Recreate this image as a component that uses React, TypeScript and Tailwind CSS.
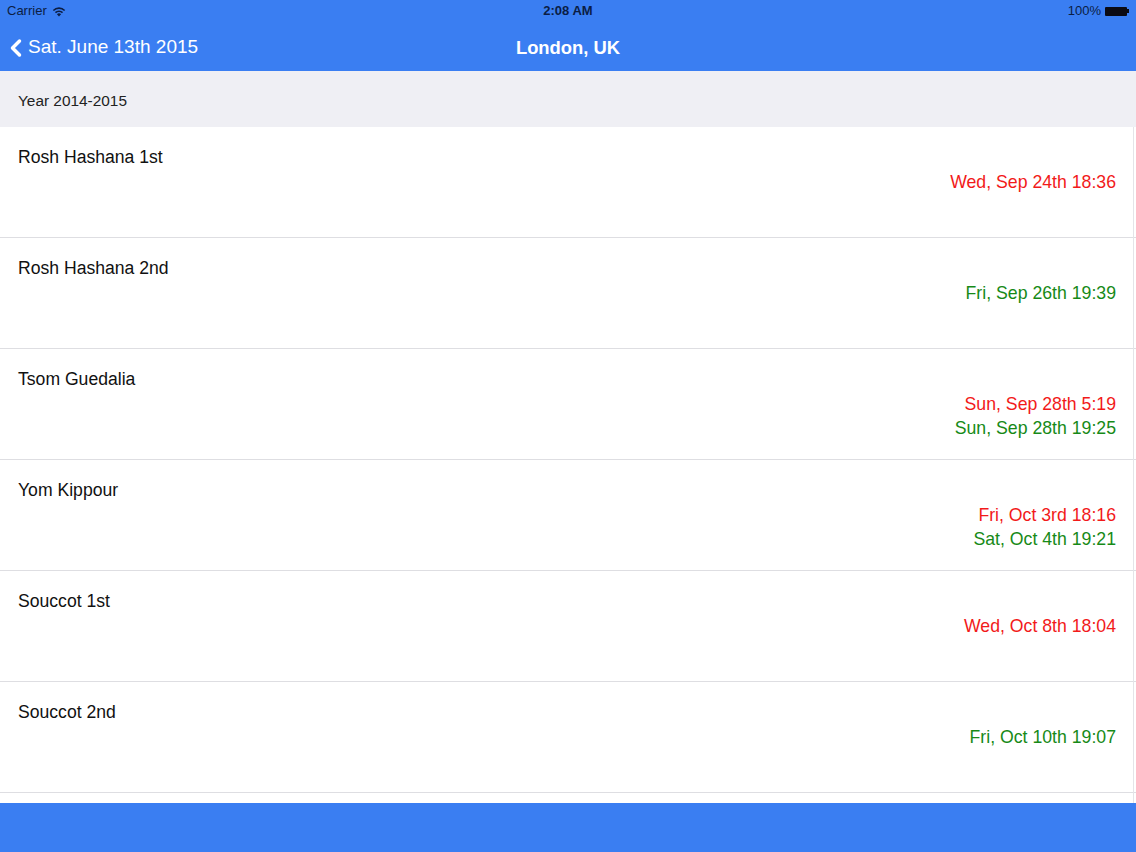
import { ChevronLeft } from "lucide-react";

type Holiday = {
  name: string;
  times: { text: string; color: "red" | "green" }[];
};

const holidays: Holiday[] = [
  { name: "Rosh Hashana 1st", times: [{ text: "Wed, Sep 24th 18:36", color: "red" }] },
  { name: "Rosh Hashana 2nd", times: [{ text: "Fri, Sep 26th 19:39", color: "green" }] },
  {
    name: "Tsom Guedalia",
    times: [
      { text: "Sun, Sep 28th 5:19", color: "red" },
      { text: "Sun, Sep 28th 19:25", color: "green" },
    ],
  },
  {
    name: "Yom Kippour",
    times: [
      { text: "Fri, Oct 3rd 18:16", color: "red" },
      { text: "Sat, Oct 4th 19:21", color: "green" },
    ],
  },
  { name: "Souccot 1st", times: [{ text: "Wed, Oct 8th 18:04", color: "red" }] },
  { name: "Souccot 2nd", times: [{ text: "Fri, Oct 10th 19:07", color: "green" }] },
];

function StatusBar() {
  return (
    <div className="relative flex h-[22px] items-center justify-between px-[7px] text-[13px] text-[#0b1d44]">
      <div className="flex items-center gap-[5px]">
        <span>Carrier</span>
        <svg width="14" height="11" viewBox="0 0 14 11" fill="#0b1d44">
          <path d="M7 10.5 L4.9 8.2 A3 3 0 0 1 9.1 8.2 Z" />
          <path d="M2.9 6.1 A5.8 5.8 0 0 1 11.1 6.1 L10 7.3 A4.2 4.2 0 0 0 4 7.3 Z" />
          <path d="M0.8 3.9 A8.8 8.8 0 0 1 13.2 3.9 L12.1 5.1 A7.2 7.2 0 0 0 1.9 5.1 Z" />
        </svg>
      </div>
      <span className="absolute left-1/2 -translate-x-1/2 font-bold">2:08 AM</span>
      <div className="flex items-center gap-[4px]">
        <span>100%</span>
        <div className="flex items-center">
          <div className="h-[9px] w-[22px] rounded-[1px] bg-[#0b0b14]" />
          <div className="h-[4px] w-[2px] bg-[#0b0b14]" />
        </div>
      </div>
    </div>
  );
}

export default function App() {
  return (
    <div
      className="flex h-[852px] w-[1136px] flex-col overflow-hidden bg-white"
      style={{ fontFamily: '"Liberation Sans", Arial, sans-serif' }}
    >
      <div className="bg-[#3a7ef2]">
        <StatusBar />
        <div className="relative flex h-[49px] items-center pt-[2px]">
          <button type="button" className="flex items-center pl-[2px] text-[19px] text-white">
            <ChevronLeft size={28} strokeWidth={3} className="-mr-[2px]" />
            <span>Sat. June 13th 2015</span>
          </button>
          <h1 className="absolute left-1/2 -translate-x-1/2 text-[18.4px] font-bold text-white">
            London, UK
          </h1>
        </div>
      </div>

      <div className="relative flex flex-1 flex-col overflow-hidden">
        <div className="flex h-[56px] shrink-0 items-center bg-[#efeff4] px-[18px] pt-[4px] text-[15.4px] text-[#222]">
          Year 2014-2015
        </div>
        <ul className="flex flex-col">
          {holidays.map((h) => (
            <li
              key={h.name}
              className="flex h-[111px] shrink-0 flex-col border-b border-[#dedee2] px-[18px] pt-[19px] pr-[20px]"
            >
              <span className="text-[17.6px] leading-[22px] text-[#111]">{h.name}</span>
              <div className="mt-[2px] flex flex-col items-end">
                {h.times.map((t) => (
                  <span
                    key={t.text}
                    className={
                      "text-[17.7px] leading-[24px] " +
                      (t.color === "red" ? "text-[#f21a1a]" : "text-[#178a17]")
                    }
                  >
                    {t.text}
                  </span>
                ))}
              </div>
            </li>
          ))}
          <li className="h-[40px] shrink-0" />
        </ul>
        <div className="absolute right-[2px] top-[56px] bottom-0 w-px bg-[#e4e4e8]" />
      </div>

      <div className="h-[49px] shrink-0 bg-[#3a7ef2]" />
    </div>
  );
}
